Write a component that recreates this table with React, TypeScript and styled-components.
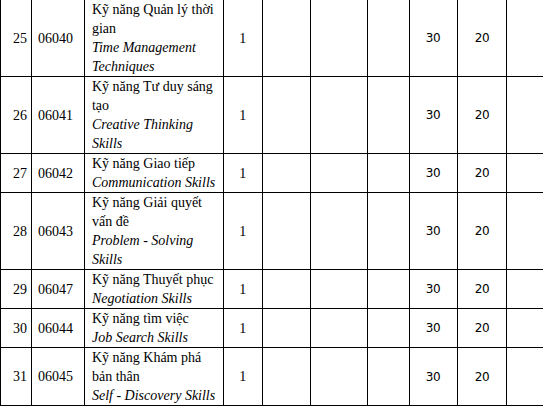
import React from "react";
import styled, { createGlobalStyle } from "styled-components";

const GlobalStyle = createGlobalStyle`
  html, body {
    margin: 0;
    padding: 0;
    background: #ffffff;
    overflow: hidden;
  }
  body {
    font-family: "Times New Roman", "Liberation Serif", Tinos, serif;
  }
`;

const Table = styled.table`
  border-collapse: collapse;
  width: 543px;
  font-family: "Times New Roman", "Liberation Serif", Tinos, serif;
  font-size: 14px;
  color: #000;
`;

const Col = styled.col<{ $w: number }>`
  width: ${(p) => p.$w}px;
`;

const Row = styled.tr<{ $first?: boolean }>`
  & > td {
    border: 1px solid #000;
    border-top: ${(p) => (p.$first ? "none" : "1px solid #000")};
  }
  & > td:last-child {
    border-right: none;
  }
`;

const Cell = styled.td<{ $align?: "left" | "center" | "right" }>`
  padding: 0 5px;
  vertical-align: middle;
  text-align: ${(p) => p.$align ?? "left"};
  font-family: "Times New Roman", "Liberation Serif", Tinos, serif;
  font-size: 14px;
  line-height: 19px;
`;

const NumCell = styled(Cell)`
  padding-right: 4px;
`;

const CodeCell = styled(Cell)`
  padding-left: 6px;
`;

const NameCell = styled(Cell)`
  padding-left: 7px;
`;

const HourCell = styled.td`
  padding: 0;
  vertical-align: middle;
  text-align: center;
  font-family: "DejaVu Sans", sans-serif;
  font-size: 12px;
  letter-spacing: -0.3px;
`;

const Vi = styled.div`
  font-family: "Times New Roman", "Liberation Serif", Tinos, serif;
`;
const En = styled.div`
  font-family: "Times New Roman", "Liberation Serif", Tinos, serif;
  font-style: italic;
`;

type Course = {
  no: string;
  code: string;
  vi: string[];
  en: string[];
};

const courses: Course[] = [
  { no: "25", code: "06040", vi: ["Kỹ năng Quản lý thời", "gian"], en: ["Time Management", "Techniques"] },
  { no: "26", code: "06041", vi: ["Kỹ năng Tư duy sáng", "tạo"], en: ["Creative Thinking", "Skills"] },
  { no: "27", code: "06042", vi: ["Kỹ năng Giao tiếp"], en: ["Communication Skills"] },
  { no: "28", code: "06043", vi: ["Kỹ năng Giải quyết", "vấn đề"], en: ["Problem - Solving", "Skills"] },
  { no: "29", code: "06047", vi: ["Kỹ năng Thuyết phục"], en: ["Negotiation Skills"] },
  { no: "30", code: "06044", vi: ["Kỹ năng tìm việc"], en: ["Job Search Skills"] },
  { no: "31", code: "06045", vi: ["Kỹ năng Khám phá", "bản thân"], en: ["Self - Discovery Skills"] },
];

const widths = [31, 53, 139, 39, 48, 57, 42, 48, 50, 36];

export default function App() {
  return (
    <>
      <GlobalStyle />
      <Table>
        <colgroup>
          {widths.map((w, i) => (
            <Col key={i} $w={w} />
          ))}
        </colgroup>
        <tbody>
          {courses.map((c, i) => (
            <Row key={c.no} $first={i === 0}>
              <NumCell $align="right">{c.no}</NumCell>
              <CodeCell>{c.code}</CodeCell>
              <NameCell>
                {c.vi.map((l) => (
                  <Vi key={l}>{l}</Vi>
                ))}
                {c.en.map((l) => (
                  <En key={l}>{l}</En>
                ))}
              </NameCell>
              <Cell $align="center">1</Cell>
              <Cell />
              <Cell />
              <Cell />
              <HourCell>30</HourCell>
              <HourCell>20</HourCell>
              <Cell />
            </Row>
          ))}
        </tbody>
      </Table>
    </>
  );
}
